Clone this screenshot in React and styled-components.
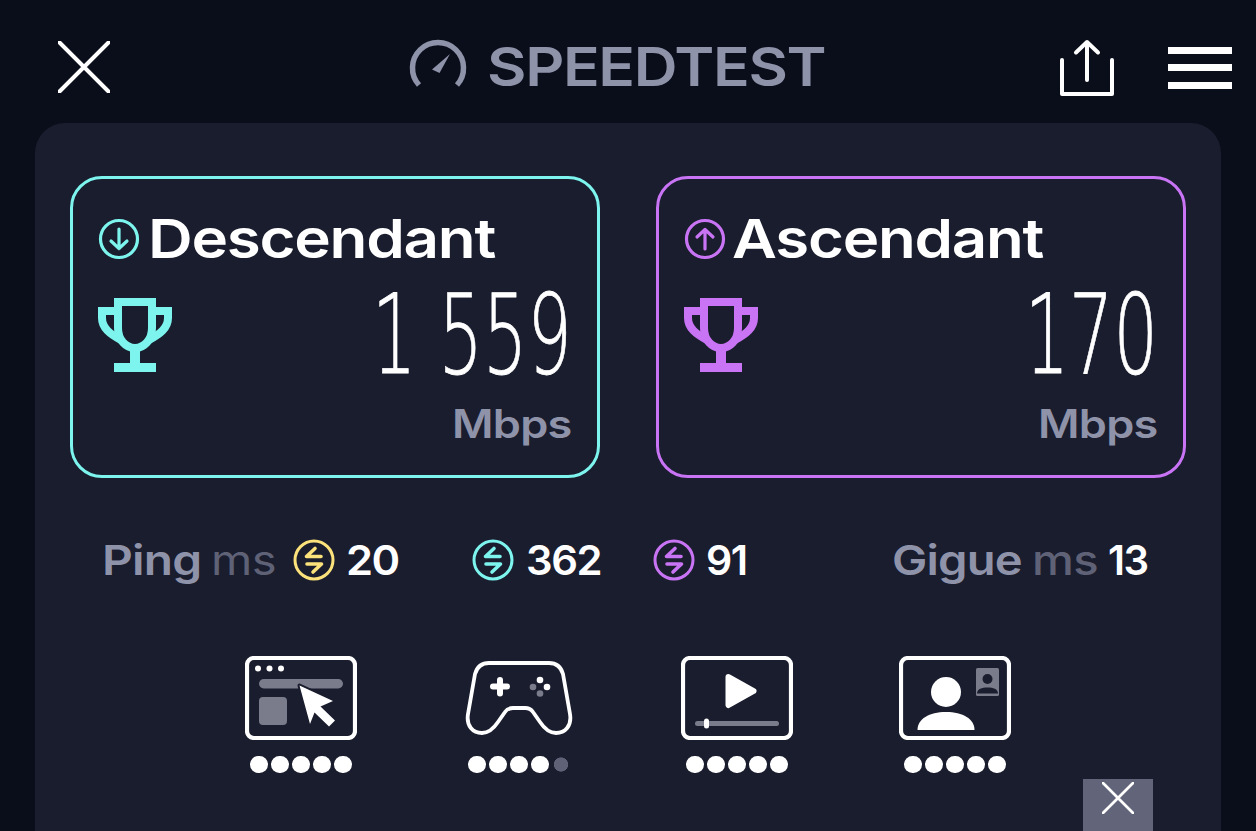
import React from "react";
import styled, { createGlobalStyle } from "styled-components";

const Global = createGlobalStyle`
  html, body { margin: 0; padding: 0; background: #0a0d1a; }
  body { width: 1256px; height: 831px; overflow: hidden; font-family: Inter, "Noto Sans", sans-serif; }
`;

const Page = styled.div`
  position: relative;
  width: 1256px;
  height: 831px;
  overflow: hidden;
  background: #0a0d1a;
  display: flex;
  flex-direction: column;
`;
const Header = styled.header`
  height: 112px;
  padding: 11px 24px 0 58px;
  flex: none;
  display: flex;
  align-items: center;
`;
const Brand = styled.div`
  display: flex;
  align-items: center;
  gap: 20px;
  margin-left: 299px;
`;
const Wide = styled.span`
  display: inline-block;
  width: ${(p) => p.$w}px;
  white-space: nowrap;
  transform: scaleX(${(p) => p.$s || 1});
  transform-origin: left center;
`;
const BrandName = styled(Wide)`
  font-size: 54px;
  font-weight: 600;
  line-height: 1;
  color: #8f93aa;
  letter-spacing: -1.2px;
`;
const Actions = styled.div`
  margin-left: auto;
  display: flex;
  align-items: center;
  gap: 54px;
`;
const Burger = styled.div`
  width: 64px;
  display: flex;
  flex-direction: column;
  gap: 10.5px;
  margin-top: 1px;
`;
const BurgerBar = styled.span`
  height: 7px;
  background: #fff;
`;
const Icon = styled.svg`
  display: block;
  flex: none;
`;
const Card = styled.main`
  flex: 1;
  margin: 0 35px;
  padding: 53px 35px 0;
  background: #1a1d2e;
  border-radius: 30px 30px 0 0;
`;
const Speeds = styled.section`
  display: flex;
  gap: 56px;
`;
const SpeedBox = styled.div`
  width: 530px;
  height: 302px;
  box-sizing: border-box;
  border: 3.5px solid ${(p) => p.$color};
  border-radius: 32px;
  padding: 35px 25px 0;
  display: flex;
  flex-direction: column;
`;
const SpeedTitle = styled.div`
  display: flex;
  align-items: center;
  gap: 8px;
  height: 50px;
`;
const TitleText = styled(Wide)`
  font-size: 54px;
  font-weight: 600;
  line-height: 1;
  color: #fff;
  letter-spacing: -1.1px;
  margin-left: ${(p) => p.$nudge || 0}px;
`;
const SpeedBody = styled.div`
  display: flex;
  justify-content: space-between;
  height: 74px;
  margin-top: 33.5px;
`;
const SpeedValue = styled.span`
  font-family: "DejaVu Sans Light", "DejaVu Sans", sans-serif;
  font-weight: 200;
  font-size: 110px;
  line-height: 74px;
  height: 74px;
  color: #fff;
  white-space: nowrap;
  transform: scaleX(0.635);
  transform-origin: right center;
  -webkit-text-stroke: 0.8px #fff;
`;
const Unit = styled.div`
  align-self: flex-end;
  font-size: 39px;
  font-weight: 600;
  line-height: 1;
  color: #8f93aa;
  letter-spacing: -0.6px;
  margin-top: 32px;
  transform: scaleX(1.155);
  transform-origin: right center;
`;
const Stats = styled.section`
  display: flex;
  align-items: center;
  height: 60px;
  margin-top: 52px;
  padding-left: 32px;
`;
const StatGroup = styled.div`
  display: flex;
  align-items: center;
  margin-left: ${(p) => p.$offset || 0}px;
`;
const StatLabel = styled(Wide)`
  font-size: 41px;
  font-weight: 600;
  line-height: 1;
  color: #8f93aa;
  letter-spacing: -0.7px;
`;
const StatUnit = styled(Wide)`
  font-size: 41px;
  font-weight: ${(p) => p.$weight || 400};
  line-height: 1;
  color: #5f6276;
  margin-left: ${(p) => p.$gap}px;
  letter-spacing: -0.5px;
`;
const StatValue = styled(Wide)`
  font-size: 41px;
  font-weight: 600;
  line-height: 1;
  color: #fff;
  letter-spacing: -1.4px;
  margin-left: ${(p) => p.$gap || 11}px;
`;
const StatIcon = styled(Icon)`
  margin-left: ${(p) => p.$gap || 0}px;
`;
const Quality = styled.section`
  display: flex;
  justify-content: center;
  margin-top: 66px;
`;
const QualityItem = styled.div`
  width: 218px;
  display: flex;
  flex-direction: column;
  align-items: center;
  gap: 15.5px;
`;
const Dots = styled.div`
  display: flex;
  gap: 3.5px;
`;
const Dot = styled.span`
  width: 17.5px;
  height: 17.5px;
  display: block;
  background: ${(p) => (p.$off ? "radial-gradient(circle at center, #5f6276 6.8px, transparent 7.4px)" : "#fff")};
  border-radius: 50%;
`;
const CloseAd = styled.button`
  position: absolute;
  left: 1083px;
  top: 779px;
  width: 70px;
  height: 52px;
  padding: 3px 0 0;
  border: 0;
  background: #62657a;
  display: flex;
  justify-content: center;
  align-items: flex-start;
`;

const CloseIcon = ({ size, width = 4 }) => (
  <Icon width={size} height={size} viewBox="0 0 52 52">
    <path d="M1.5 1.5 50.5 50.5M50.5 1.5 1.5 50.5" stroke="#fff" strokeWidth={width} strokeLinecap="round" fill="none" />
  </Icon>
);

const Gauge = () => (
  <Icon width="58" height="56" viewBox="0 0 58 56">
    <path d="M10 46A25.500 25.500 0 1 1 48 46" stroke="#8f93aa" strokeWidth="5.500" fill="none" />
    <path d="M23 30.500 41 15 30.500 34Z" fill="#8f93aa" />
  </Icon>
);

const ShareIcon = () => (
  <Icon width="54" height="57" viewBox="0 0 54 57">
    <g stroke="#fff" strokeWidth="4" strokeLinecap="round" strokeLinejoin="round" fill="none">
      <path d="M2 21V55H52V21" />
      <path d="M27 41V3M16 13.500 27 3 38 13.500" />
    </g>
  </Icon>
);

const ArrowCircle = ({ color, up }) => (
  <Icon width="42" height="42" viewBox="0 0 42 42">
    <g stroke={color} fill="none" strokeLinecap="round" strokeLinejoin="round">
      <circle cx="21" cy="21" r="18.500" strokeWidth="3.200" />
      <path
        d={up ? "M21 31V11.500M13 19 21 11.500 29 19" : "M21 11V30.500M13 23 21 30.500 29 23"}
        strokeWidth="3.200"
      />
    </g>
  </Icon>
);

const Trophy = ({ color }) => (
  <Icon width="74" height="74" viewBox="0 0 74 74">
    <g fill="none" stroke={color}>
      <path d="M20 4H54V30C54 42 46 50 37 50 28 50 20 42 20 30Z" strokeWidth="8" />
      <path d="M18 13H4V20C4 30 12 36 23 42M56 13H70V20C70 30 62 36 51 42" strokeWidth="8" />
    </g>
    <path d="M32 50H42V65H58V74H16V65H32Z" fill={color} />
  </Icon>
);

const Exchange = ({ color, gap }) => (
  <StatIcon $gap={gap} width="42" height="42" viewBox="0 0 42 42">
    <g stroke={color} fill="none" strokeLinecap="round" strokeLinejoin="round">
      <circle cx="21" cy="21" r="19" strokeWidth="3" />
      <path d="M28 17.500H13.500L22 9.500M14 25H28.500L20 33" strokeWidth="3.600" />
    </g>
  </StatIcon>
);

const BrowserIcon = () => (
  <Icon width="112" height="84" viewBox="0 0 112 84">
    <rect x="2" y="2" width="108" height="80" rx="7" fill="none" stroke="#fff" strokeWidth="4.200" />
    <circle cx="13" cy="12.500" r="3" fill="#fff" />
    <circle cx="24.500" cy="12.500" r="3" fill="#fff" />
    <circle cx="36" cy="12.500" r="3" fill="#fff" />
    <rect x="14" y="23" width="84" height="9.500" rx="4.750" fill="#7b7c8b" />
    <rect x="14" y="41" width="28" height="28" rx="4" fill="#7b7c8b" />
    <path
      d="M54.500 29.500 88 45 75.500 50.500 90 64.500 84 70.500 69.500 56.500 65 68Z"
      fill="#fff"
      stroke="#1a1d2e"
      strokeWidth="4"
      strokeLinejoin="round"
      paintOrder="stroke"
    />
  </Icon>
);

const GamepadIcon = () => (
  <Icon width="108" height="84" viewBox="0 0 108 84">
    <path
      d="M24 7H84C92 7 96 11 98 18L105 58C107 70 100 77 91 77 84 77 79 72 75 66L68 56C66 53 64 52 60 52H48C44 52 42 53 40 56L33 66C29 72 24 77 17 77 8 77 1 70 3 58L10 18C12 11 16 7 24 7Z"
      fill="none"
      stroke="#fff"
      strokeWidth="3.800"
      strokeLinejoin="round"
    />
    <path d="M35 24V37.500M28 30.500H42" stroke="#fff" strokeWidth="6" strokeLinecap="round" />
    <circle cx="75" cy="24" r="3.300" fill="#fff" />
    <circle cx="82" cy="31" r="3.300" fill="#fff" />
    <circle cx="68" cy="31" r="3.300" fill="#7b7c8b" />
    <circle cx="75" cy="37.500" r="3.300" fill="#7b7c8b" />
  </Icon>
);

const VideoIcon = () => (
  <Icon width="112" height="84" viewBox="0 0 112 84">
    <rect x="2" y="2" width="108" height="80" rx="7" fill="none" stroke="#fff" strokeWidth="4.200" />
    <path d="M47.500 21 72.500 35 47.500 49Z" fill="#fff" stroke="#fff" strokeWidth="6" strokeLinejoin="round" />
    <rect x="14" y="65" width="84" height="5" rx="2.500" fill="#7b7c8b" />
    <rect x="23" y="62.500" width="5" height="10" rx="2.500" fill="#fff" />
  </Icon>
);

const CallIcon = () => (
  <Icon width="112" height="84" viewBox="0 0 112 84">
    <rect x="2" y="2" width="108" height="80" rx="7" fill="none" stroke="#fff" strokeWidth="4.200" />
    <circle cx="47" cy="36" r="15" fill="#fff" />
    <path d="M18.500 74C18.500 63 30 56 47 56 64 56 75.500 63 75.500 74Z" fill="#fff" />
    <rect x="77" y="12" width="23" height="28" rx="1.500" fill="#7b7c8b" />
    <circle cx="88.500" cy="23" r="5" fill="#1a1d2e" />
    <path d="M78 37.500C78 33 83 31.500 88.500 31.500 94 31.500 99 33 99 37.500Z" fill="#1a1d2e" />
  </Icon>
);

const qualities = [
  { id: "web", Glyph: BrowserIcon, lit: 5 },
  { id: "game", Glyph: GamepadIcon, lit: 4 },
  { id: "video", Glyph: VideoIcon, lit: 5 },
  { id: "call", Glyph: CallIcon, lit: 5 },
];

const speeds = [
  { id: "down", title: "Descendant", value: "1 559", color: "#7df5ee", up: false, w: 346, s: 1.146, nudge: 0 },
  { id: "up", title: "Ascendant", value: "170", color: "#c974f5", up: true, w: 309, s: 1.144, nudge: -2 },
];

export default function App() {
  return (
    <Page>
      <Global />
      <Header>
        <CloseIcon size={52} />
        <Brand>
          <Gauge />
          <BrandName $w={335} $s={1.124}>SPEEDTEST</BrandName>
        </Brand>
        <Actions>
          <ShareIcon />
          <Burger>
            <BurgerBar />
            <BurgerBar />
            <BurgerBar />
          </Burger>
        </Actions>
      </Header>
      <Card>
        <Speeds>
          {speeds.map((s) => (
            <SpeedBox key={s.id} $color={s.color}>
              <SpeedTitle>
                <ArrowCircle color={s.color} up={s.up} />
                <TitleText $w={s.w} $s={s.s} $nudge={s.nudge}>{s.title}</TitleText>
              </SpeedTitle>
              <SpeedBody>
                <Trophy color={s.color} />
                <SpeedValue>{s.value}</SpeedValue>
              </SpeedBody>
              <Unit>Mbps</Unit>
            </SpeedBox>
          ))}
        </Speeds>
        <Stats>
          <StatGroup>
            <StatLabel $w={98} $s={1.167}>Ping</StatLabel>
            <StatUnit $w={63} $s={1.15} $gap={11}>ms</StatUnit>
            <Exchange color="#fbe27a" gap={19} />
            <StatValue $w={51} $s={1.06}>20</StatValue>
          </StatGroup>
          <StatGroup $offset={75}>
            <Exchange color="#7df5ee" />
            <StatValue $w={74} $s={1.02} $gap={12}>362</StatValue>
          </StatGroup>
          <StatGroup $offset={53}>
            <Exchange color="#c974f5" />
            <StatValue $w={41}>91</StatValue>
          </StatGroup>
          <StatGroup $offset={145}>
            <StatLabel $w={128} $s={1.15}>Gigue</StatLabel>
            <StatUnit $w={65} $s={1.15} $gap={12} $weight={500}>ms</StatUnit>
            <StatValue $w={40} $s={0.98}>13</StatValue>
          </StatGroup>
        </Stats>
        <Quality>
          {qualities.map(({ id, Glyph, lit }) => (
            <QualityItem key={id}>
              <Glyph />
              <Dots>
                {[0, 1, 2, 3, 4].map((i) => (
                  <Dot key={i} $off={i >= lit} />
                ))}
              </Dots>
            </QualityItem>
          ))}
        </Quality>
      </Card>
      <CloseAd aria-label="Fermer">
        <CloseIcon size={32} width={4.5} />
      </CloseAd>
    </Page>
  );
}
